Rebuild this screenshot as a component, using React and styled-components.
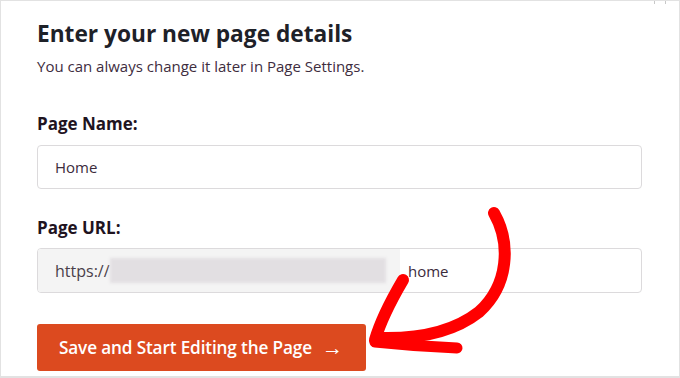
import styled, { createGlobalStyle } from "styled-components";

const GlobalStyle = createGlobalStyle`
  body {
    margin: 0;
    background: #fff;
    font-family: "Open Sans", "Liberation Sans", sans-serif;
  }
`;

const Frame = styled.div`
  position: relative;
  width: 680px;
  height: 378px;
  box-sizing: border-box;
  border: 1px solid #e2e2e2;
  border-bottom-width: 2px;
  overflow: hidden;
  padding: 17px 37px 0 36px;
`;

const Title = styled.h2`
  margin: 0;
  font-size: 22.7px;
  line-height: 32px;
  font-weight: 700;
  color: #1e2128;
`;

const Subtitle = styled.p`
  margin: 6px 0 0;
  font-size: 15px;
  line-height: 21px;
  color: #3e2d3e;
`;

const Field = styled.div`
  margin-top: ${(p) => p.$gap}px;
`;

const Label = styled.div`
  font-size: 17px;
  line-height: 23px;
  font-weight: 700;
  color: #1f141f;
  margin-bottom: ${(p) => p.$gap}px;
`;

const Input = styled.div`
  height: 44px;
  box-sizing: border-box;
  border: 1px solid #dcdadc;
  border-radius: 4px;
  display: flex;
  align-items: center;
  padding: 0 17px;
  font-size: 15px;
  color: #3c2b3c;
`;

const UrlInput = styled(Input)`
  height: 45px;
  padding: 0;
  overflow: hidden;
`;

const Prefix = styled.div`
  width: 362px;
  height: 100%;
  background: #f4f4f4;
  display: flex;
  align-items: center;
  padding-left: 17px;
  box-sizing: border-box;
  font-size: 16px;
  color: #4a3f4a;
`;

const Blurred = styled.span`
  display: inline-block;
  width: 276px;
  height: 25px;
  background: #e2dfe2;
  filter: blur(1.5px);
`;

const Slug = styled.span`
  padding-left: 8px;
`;

const Button = styled.button`
  margin-top: 31px;
  width: 329px;
  height: 47px;
  border: none;
  border-radius: 3px;
  background: #dc4a1f;
  color: #fff;
  font-family: inherit;
  font-size: 17.2px;
  font-weight: 600;
  text-align: left;
  padding: 0 0 0 22px;
  display: flex;
  align-items: center;
  letter-spacing: -0.15px;
`;

const ArrowGlyph = styled.span`
  margin-left: 10px;
  font-size: 21px;
  font-weight: 400;
  line-height: 1;
`;

const Arrow = styled.svg`
  position: absolute;
  left: 0;
  top: 0;
  pointer-events: none;
`;

const Ticks = styled.div`
  position: absolute;
  top: 0;
  right: 13px;
  width: 10px;
  height: 3px;
  border-left: 1px solid #c8c8c8;
  border-right: 1px solid #c8c8c8;
`;

export default function App() {
  return (
    <>
      <GlobalStyle />
      <Frame>
        <Ticks />
        <Title>Enter your new page details</Title>
        <Subtitle>You can always change it later in Page Settings.</Subtitle>

        <Field $gap={35}>
          <Label $gap={10}>Page Name:</Label>
          <Input>Home</Input>
        </Field>

        <Field $gap={27}>
          <Label $gap={9}>Page URL:</Label>
          <UrlInput>
            <Prefix>
              https://
              <Blurred />
            </Prefix>
            <Slug>home</Slug>
          </UrlInput>
        </Field>

        <Button>
          Save and Start Editing the Page<ArrowGlyph>→</ArrowGlyph>
        </Button>

        {/* hand drawn pointer */}
        <Arrow width="680" height="378" viewBox="0 0 680 378">
          <g fill="none" stroke="#ff0000" strokeLinecap="round" strokeLinejoin="round">
            <path
              d="M493 212 C510 242 508 284 478 311 C450 333 412 338 378 337"
              strokeWidth="12"
            />
            <path d="M402 279 C392 296 380 318 374 339" strokeWidth="12" />
            <path d="M374 341 C402 344 430 346 456 347" strokeWidth="11" />
          </g>
        </Arrow>
      </Frame>
    </>
  );
}
